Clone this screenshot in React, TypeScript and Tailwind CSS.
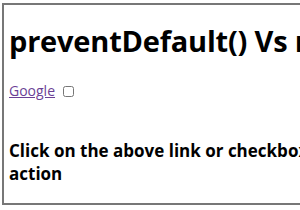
import React from 'react';

const App: React.FC = () => {
  return (
    <div className="h-[210px] w-[300px] overflow-hidden bg-white pl-[2px] pt-[3px] font-['Open_Sans',sans-serif] text-black">
      <div className="h-[202px] w-[560px] border-y-2 border-l-2 border-[#777777] pl-[5px]">
        <h1 className="mt-[20px] text-[29px] font-bold leading-[32px] tracking-[-0.2px]">
          preventDefault() Vs return false
        </h1>
        <div className="mt-[24px] flex items-center gap-[8px] text-[14px] leading-[20px]">
          <a href="#" className="text-[#6b3f96] underline">
            Google
          </a>
          <input type="checkbox" className="h-[11px] w-[11px]" />
        </div>
        <p className="mt-[38px] w-[490px] text-[17px] font-bold leading-[23px]">
          Click on the above link or checkbox to see the default action
        </p>
      </div>
    </div>
  );
};

export default App;
